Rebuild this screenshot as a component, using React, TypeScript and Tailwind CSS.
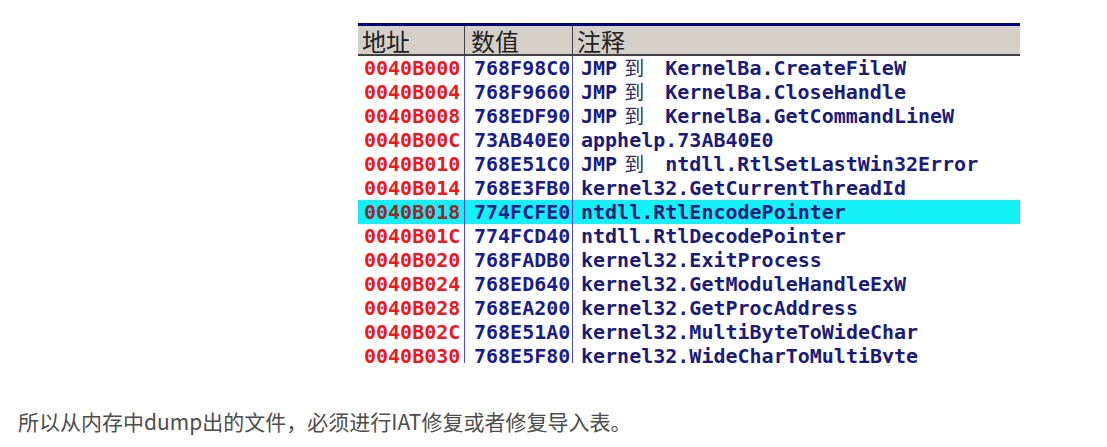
import React from 'react';

type Row = { addr: string; value: string; jmp?: boolean; name: string; active?: boolean };

const ROWS: Row[] = [
  { addr: '0040B000', value: '768F98C0', jmp: true, name: 'KernelBa.CreateFileW' },
  { addr: '0040B004', value: '768F9660', jmp: true, name: 'KernelBa.CloseHandle' },
  { addr: '0040B008', value: '768EDF90', jmp: true, name: 'KernelBa.GetCommandLineW' },
  { addr: '0040B00C', value: '73AB40E0', name: 'apphelp.73AB40E0' },
  { addr: '0040B010', value: '768E51C0', jmp: true, name: 'ntdll.RtlSetLastWin32Error' },
  { addr: '0040B014', value: '768E3FB0', name: 'kernel32.GetCurrentThreadId' },
  { addr: '0040B018', value: '774FCFE0', name: 'ntdll.RtlEncodePointer', active: true },
  { addr: '0040B01C', value: '774FCD40', name: 'ntdll.RtlDecodePointer' },
  { addr: '0040B020', value: '768FADB0', name: 'kernel32.ExitProcess' },
  { addr: '0040B024', value: '768ED640', name: 'kernel32.GetModuleHandleExW' },
  { addr: '0040B028', value: '768EA200', name: 'kernel32.GetProcAddress' },
  { addr: '0040B02C', value: '768E51A0', name: 'kernel32.MultiByteToWideChar' },
  { addr: '0040B030', value: '768E5F80', name: 'kernel32.WideCharToMultiByte' },
];

const mono = "font-['DejaVu_Sans_Mono','Liberation_Mono',monospace] font-bold text-[20px]";
const cjk = "font-['Noto_Sans_CJK_SC',sans-serif]";

const DumpTable: React.FC = () => (
  <div className="w-[662px] h-[340px] overflow-hidden bg-white">
    <div className="h-[3px] bg-[#000080]" />
    <div className={`flex h-[30px] bg-[#d4d0c8] border-b-2 border-[#404040] text-[24px] leading-[30px] text-[#202020] ${cjk}`}>
      <div className="w-[107px] pl-[4px] border-r border-[#404040]">地址</div>
      <div className="w-[108px] pl-[6px] border-r border-[#404040]">数值</div>
      <div className="flex-1 pl-[4px]">注释</div>
    </div>
    {ROWS.map((r) => (
      <div
        key={r.addr}
        className={`flex h-[24px] leading-[24px] ${mono} ${r.active ? 'bg-[#14f0f8]' : ''}`}
      >
        <div className={`w-[107px] pl-[6px] border-r border-[#4848e0] ${r.active ? 'text-[#9a2a2a]' : 'text-[#ee1820]'}`}>
          {r.addr}
        </div>
        <div className="w-[108px] pl-[9px] border-r border-[#4848e0] text-[#1c1c8a]">{r.value}</div>
        <div className="flex-1 pl-[8px] text-[#1c1c78] whitespace-nowrap flex">
          {r.jmp && (
            <>
              <span>JMP</span>
              <span className={`ml-[7px] w-[24px] font-normal text-[20px] leading-[24px] text-[#303060] ${cjk}`}>到</span>
            </>
          )}
          <span className={r.jmp ? 'ml-[17px]' : ''}>{r.name}</span>
        </div>
      </div>
    ))}
  </div>
);

export default function App() {
  return (
    <div className="w-[1107px] h-[447px] bg-white overflow-hidden">
      <div className="pt-[23px] pl-[358px]">
        <DumpTable />
      </div>
      <p className={`mt-[43px] pl-[18px] text-[21px] leading-[30px] text-[#4d4d4d] ${cjk}`}>
        所以从内存中dump出的文件，必须进行IAT修复或者修复导入表。
      </p>
    </div>
  );
}
